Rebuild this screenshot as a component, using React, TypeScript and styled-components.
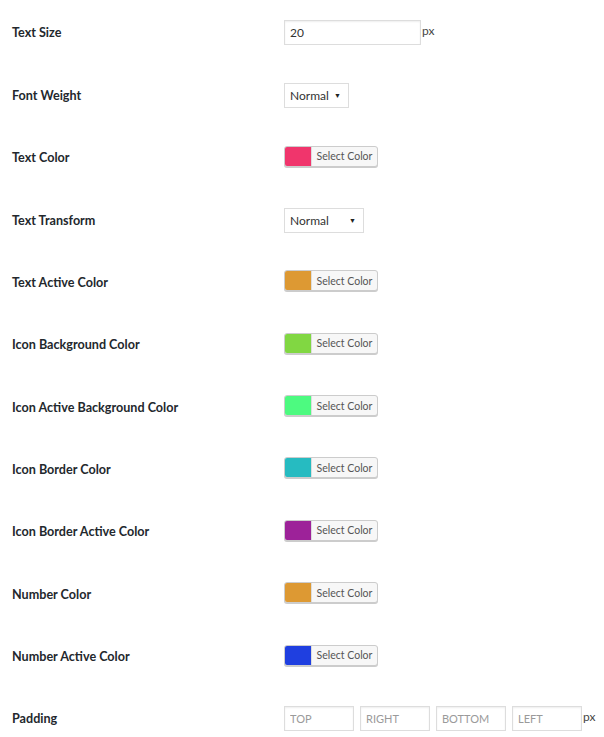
import React from 'react';
import styled, { createGlobalStyle } from 'styled-components';

const GlobalStyle = createGlobalStyle`
  body {
    margin: 0;
    background: #fff;
    font-family: Lato, "Open Sans", sans-serif;
    color: #222;
  }
`;

const Table = styled.div`
  display: grid;
  grid-template-columns: 284px 1fr;
  grid-auto-rows: 62.36px;
  padding-top: 1.8px;
`;

const Label = styled.div`
  display: flex;
  align-items: center;
  padding-left: 12px;
  font-size: 12.6px;
  font-weight: 700;
  color: #23282d;
`;

const Cell = styled.div`
  display: flex;
  align-items: center;
  gap: 6px;
  font-size: 12px;
  color: #444;
`;

const TextInput = styled.input<{ $w: number }>`
  box-sizing: border-box;
  width: ${p => p.$w}px;
  height: 25px;
  border: 1px solid #ddd;
  box-shadow: inset 0 1px 2px rgba(0, 0, 0, 0.07);
  padding: 0 5px;
  font-family: inherit;
  font-size: 12px;
  color: #333;
  outline: none;
  &::placeholder {
    color: #9a9a9a;
    font-size: 11px;
  }
`;

const Unit = styled.span`
  font-size: 12px;
  color: #444;
  margin-left: -5px;
  margin-top: -4px;
`;

const Select = styled.div<{ $w: number }>`
  box-sizing: border-box;
  width: ${p => p.$w}px;
  height: 25px;
  border: 1px solid #ddd;
  display: flex;
  align-items: center;
  justify-content: space-between;
  padding: 0 7px 0 5px;
  font-size: 12px;
  color: #333;
  background: #fff;
`;

const Caret = styled.span`
  font-size: 7px;
  color: #222;
`;

const ColorButton = styled.div`
  box-sizing: border-box;
  display: flex;
  width: 94px;
  height: 21px;
  margin-top: -3px;
  border: 1px solid #ccc;
  border-radius: 3px;
  box-shadow: 0 1px 0 #ccc;
  background: #f7f7f7;
  overflow: hidden;
`;

const Swatch = styled.span<{ $c: string }>`
  width: 26px;
  background: ${p => p.$c};
`;

const ColorText = styled.span`
  flex: 1;
  display: flex;
  align-items: center;
  justify-content: center;
  font-size: 10.5px;
  color: #555;
  border-left: 1px solid #ddd;
`;

const ColorPicker = ({ color }: { color: string }) => (
  <ColorButton>
    <Swatch $c={color} />
    <ColorText>Select Color</ColorText>
  </ColorButton>
);

const colors: [string, string][] = [
  ['Text Active Color', '#dd9933'],
  ['Icon Background Color', '#81d742'],
  ['Icon Active Background Color', '#4dfa80'],
  ['Icon Border Color', '#26bbc1'],
  ['Icon Border Active Color', '#9d2299'],
  ['Number Color', '#dd9933'],
  ['Number Active Color', '#1f3fe0'],
];

export default function App() {
  return (
    <>
      <GlobalStyle />
      <Table>
        <Label>Text Size</Label>
        <Cell>
          <TextInput $w={137} defaultValue="20" />
          <Unit>px</Unit>
        </Cell>

        <Label>Font Weight</Label>
        <Cell>
          <Select $w={65}>Normal <Caret>▼</Caret></Select>
        </Cell>

        <Label>Text Color</Label>
        <Cell>
          <ColorPicker color="#f0356c" />
        </Cell>

        <Label>Text Transform</Label>
        <Cell>
          <Select $w={80}>Normal <Caret>▼</Caret></Select>
        </Cell>

        {colors.map(([name, c]) => (
          <React.Fragment key={name}>
            <Label>{name}</Label>
            <Cell>
              <ColorPicker color={c} />
            </Cell>
          </React.Fragment>
        ))}

        <Label>Padding</Label>
        <Cell>
          <TextInput $w={70} placeholder="TOP" />
          <TextInput $w={70} placeholder="RIGHT" />
          <TextInput $w={70} placeholder="BOTTOM" />
          <TextInput $w={70} placeholder="LEFT" />
          <Unit>px</Unit>
        </Cell>
      </Table>
    </>
  );
}
